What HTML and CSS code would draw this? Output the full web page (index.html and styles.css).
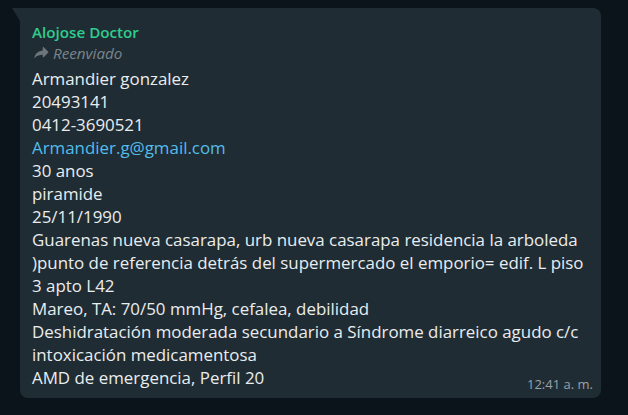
FILE: index.html
```html
<!DOCTYPE html>
<html lang="es">
<head>
<meta charset="utf-8">
<link rel="stylesheet" href="styles.css">
</head>
<body>
<div class="chat">
  <div class="bubble">
    <div class="sender">Alojose Doctor</div>
    <div class="forwarded">
      <svg class="fwd-icon" viewBox="0 0 24 24" width="18" height="18"><path d="M14.3 4.8c0-.7.9-1.1 1.4-.6l6 6.1c.3.3.3.8 0 1.1l-6 6.1c-.5.5-1.4.1-1.4-.6v-2.7c-5.1 0-8.8 1.6-11.3 5.1.8-4.9 3.5-9.4 11.3-10.5V4.8z"/></svg>
      <span>Reenviado</span>
    </div>
    <div class="text">
      <div>Armandier gonzalez</div>
      <div>20493141</div>
      <div>0412-3690521</div>
      <div><a class="link" href="#">Armandier.g@gmail.com</a></div>
      <div>30 anos</div>
      <div>piramide</div>
      <div>25/11/1990</div>
      <div>Guarenas nueva casarapa, urb nueva casarapa residencia la arboleda</div>
      <div>)punto de referencia detrás del supermercado el emporio= edif. L piso</div>
      <div>3 apto L42</div>
      <div>Mareo, TA: 70/50 mmHg, cefalea, debilidad</div>
      <div>Deshidratación moderada secundario a Síndrome diarreico agudo c/c</div>
      <div>intoxicación medicamentosa</div>
      <div class="last-row">
        <span>AMD de emergencia, Perfil 20</span>
        <span class="time">12:41 a. m.</span>
      </div>
    </div>
  </div>
</div>
</body>
</html>
```
FILE: styles.css
```css
html, body {
  margin: 0;
  padding: 0;
}
body {
  background: #0b141a;
  width: 628px;
  height: 415px;
  overflow: hidden;
  font-family: "Open Sans", "Noto Sans", sans-serif;
}
.chat {
  padding: 8px 27px 0 20px;
}
.bubble {
  position: relative;
  background: #202c33;
  border-radius: 0 8px 8px 8px;
  padding: 14px 8px 9px 12px;
  color: #e9edef;
}
.bubble::before {
  content: "";
  position: absolute;
  left: -8px;
  top: 0;
  border-top: 13px solid #202c33;
  border-left: 8px solid transparent;
}
.sender {
  color: #2ecc8f;
  font-weight: 600;
  font-size: 15.2px;
  line-height: 20px;
}
.forwarded {
  display: flex;
  align-items: center;
  gap: 3px;
  color: #7b858b;
  font-style: italic;
  font-size: 15.2px;
  line-height: 22px;
}
.fwd-icon {
  fill: #6c757b;
}
.text {
  font-size: 16.9px;
  line-height: 23px;
  margin-top: 3px;
}
.link {
  color: #53bdeb;
  text-decoration: none;
}
.last-row {
  display: flex;
  justify-content: space-between;
  align-items: flex-end;
}
.time {
  font-size: 13px;
  color: #9aa1a6;
  line-height: 15px;
  margin-bottom: -3px;
}
```
